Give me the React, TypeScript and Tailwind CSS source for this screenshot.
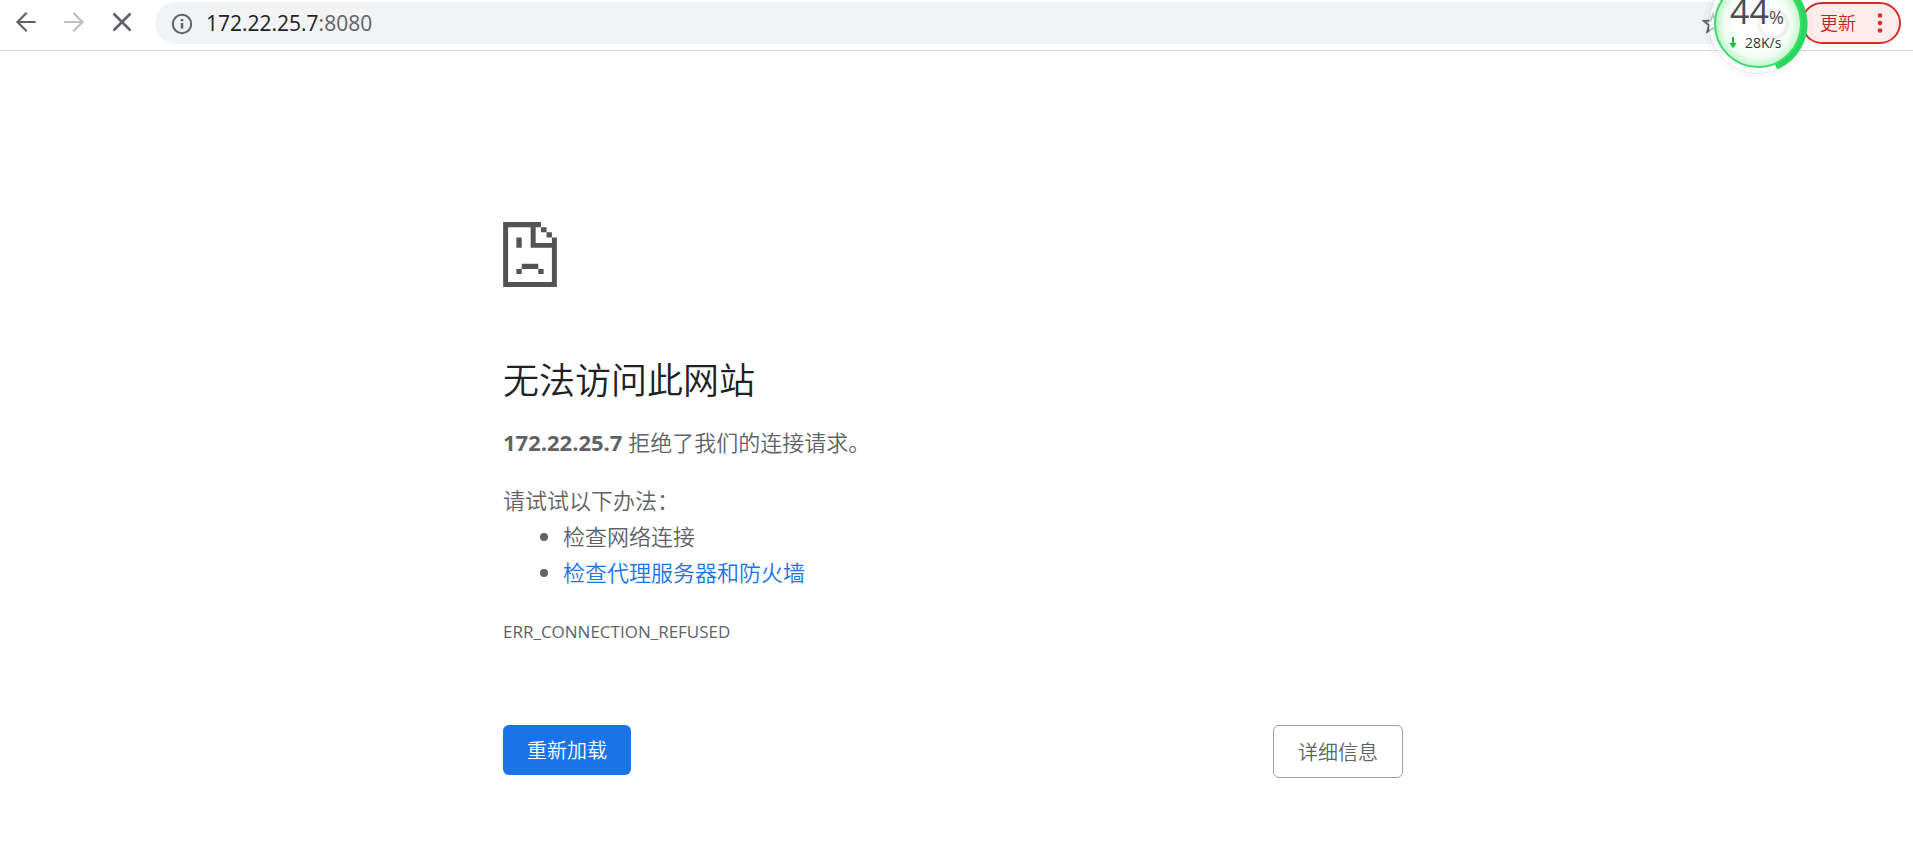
import type { ReactNode } from 'react';

function NavButton({ label, className, children }: { label: string; className: string; children: ReactNode }) {
  return (
    <button type="button" aria-label={label} className={`flex size-12 items-center justify-center ${className}`}>
      <svg viewBox="0 0 24 24" className="size-6" fill="none" stroke="currentColor" strokeWidth="2.2">
        {children}
      </svg>
    </button>
  );
}

function SpeedBall() {
  return (
    <div className="absolute -top-8 right-[99px] size-28">
      <svg viewBox="0 0 112 112" className="absolute inset-0 size-full">
        <defs>
          <radialGradient id="ball">
            <stop offset="0.5" stopColor="#ffffff" />
            <stop offset="0.8" stopColor="#effcf1" stopOpacity="0.95" />
            <stop offset="1" stopColor="#b4f3bf" stopOpacity="0.8" />
          </radialGradient>
        </defs>
        <circle cx="56" cy="56" r="55" fill="#000000" opacity="0.02" />
        <circle cx="56" cy="56" r="49.5" fill="none" stroke="#000000" opacity="0.08" />
        <circle cx="56" cy="56" r="49" fill="#ffffff" opacity="0.6" />
        <path d="M56 10 A46 46 0 0 1 74 98.5" fill="none" stroke="#27d75f" strokeWidth="6" />
        <circle cx="56" cy="56" r="43" fill="url(#ball)" stroke="#3cdc6c" strokeWidth="2" />
        <circle cx="71" cy="56" r="14" fill="none" stroke="#000000" strokeWidth="4" opacity="0.05" />
        <path d="M31 69v8" stroke="#1dbb45" strokeWidth="2" />
        <path d="M27.5 75h7l-3.5 5.5z" fill="#1dbb45" />
      </svg>
      <div className="relative flex items-baseline pt-[25px] pl-7 text-[#4d4d4d]">
        <span className="text-[34px] leading-9">44</span>
        <span className="text-lg">%</span>
      </div>
      <div className="relative pl-[43px] text-sm leading-6 text-[#333333]">28K/s</div>
    </div>
  );
}

function Toolbar() {
  return (
    <header className="relative flex h-[51px] items-start border-b border-[#d5d7da] pt-0.5 pr-3 pl-0.5">
      <nav className="-mt-1 flex text-[#5f6368]">
        <NavButton label="后退" className="">
          <path d="M21.7 12H3M12.7 2.8L3.5 12l9.2 9.2" />
        </NavButton>
        <NavButton label="前进" className="text-[#bdbfc1]">
          <path d="M2.3 12H21M11.3 2.8l9.2 9.2-9.2 9.2" />
        </NavButton>
        <NavButton label="停止" className="">
          <path d="M3.5 3.5l17 17M20.5 3.5l-17 17" strokeWidth="2.6" />
        </NavButton>
      </nav>
      <div className="ml-[9px] flex h-[42px] flex-1 items-center rounded-full bg-[#f1f3f4] pt-px pl-4 text-[21px] text-[#5f6368]">
        <svg viewBox="0 0 22 22" className="mr-[13px] size-[22px]" fill="none" stroke="currentColor" strokeWidth="2">
          <circle cx="11" cy="11" r="9.2" />
          <path d="M11 10v5.5M11 6v2.2" strokeWidth="2.6" />
        </svg>
        <input
          aria-label="地址"
          defaultValue="172.22.25.7"
          className="field-sizing-content text-[#202124] outline-none"
        />
        <span>:8080</span>
        <button type="button" aria-label="添加书签" className="mr-3 ml-auto">
          <svg viewBox="0 0 24 24" className="size-6" fill="none" stroke="currentColor" strokeWidth="2">
            <path d="M12 2.6l2.5 6 6.5.5-5 4.2 1.6 6.3-5.6-3.4-5.6 3.4L8 13.3l-5-4.2 6.5-.5z" />
          </svg>
        </button>
      </div>
      <button
        type="button"
        className="ml-16 flex h-[42px] items-center gap-[21px] rounded-full border-2 border-[#d32f2a] bg-[#fceceb] pr-4 pl-[17px] text-lg font-[350] text-[#c5221f]"
      >
        更新
        <svg viewBox="0 0 6 22" className="h-[22px] w-1.5" fill="#d93025">
          <circle cx="3" cy="3.5" r="2.3" />
          <circle cx="3" cy="11" r="2.3" />
          <circle cx="3" cy="18.5" r="2.3" />
        </svg>
      </button>
      <SpeedBall />
    </header>
  );
}

// pixelated "sad page" drawing
function SadPage() {
  return (
    <svg viewBox="0 0 162 196" className="h-[65px] w-[54px]" fill="#535353">
      <path d="M0 0h114v16h17v15h16v16h15v149H0zM15 16v165h132V78H83V16zM98 16v47h49V47h-16V31h-17V16z" fillRule="evenodd" />
      <path d="M40 47h16v31H40zM56 126h50v16H56zM40 142h16v15H40zM106 142h16v15h-16z" />
    </svg>
  );
}

export default function App() {
  return (
    <div className="overflow-x-hidden bg-white font-['Open_Sans','Noto_Sans_CJK_SC',sans-serif]">
      <Toolbar />
      <div className="pr-[7px]">
        <main className="mx-auto max-w-[900px] pt-[171px] text-[22px] leading-9 font-[350] text-[#5f6368]">
          <SadPage />
          <h1 className="mt-[72px] text-4xl leading-[44px] font-[350] text-[#202124]">无法访问此网站</h1>
          <p className="mt-[21px]">
            <strong>172.22.25.7</strong> 拒绝了我们的连接请求。
          </p>
          <p className="mt-[22px]">请试试以下办法：</p>
          <ul className="list-disc pl-[60px]">
            <li>检查网络连接</li>
            <li>
              <a href="#buttons" className="text-[#1a73e8]">
                检查代理服务器和防火墙
              </a>
            </li>
          </ul>
          <p className="mt-7 text-[17px] leading-7 font-normal">ERR_CONNECTION_REFUSED</p>
          <div id="buttons" className="mt-[79px] flex items-start justify-between text-xl">
            <button type="button" className="h-[50px] rounded-md bg-[#1a73e8] px-6 pt-0.5 text-white">
              重新加载
            </button>
            <button type="button" className="h-[53px] rounded-md border border-[#9aa0a6] px-6 pt-0.5">
              详细信息
            </button>
          </div>
        </main>
      </div>
    </div>
  );
}
